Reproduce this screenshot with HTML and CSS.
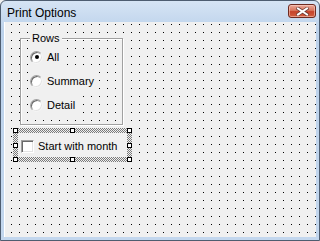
FILE: index.html
```html
<!DOCTYPE html>
<html lang="en">
<head>
    <meta charset="UTF-8">
    <title>Print Options</title>
    <link rel="stylesheet" href="styles.css">
</head>
<body>
    <div class="window">
        <div class="titlebar">
            <span class="title">Print Options</span>
            <button class="close-button" aria-label="Close">
                <svg width="13" height="9" viewBox="0 0 13 9">
                    <path d="M2 1.5 L11 7.5 M11 1.5 L2 7.5" stroke="#6b3a33" stroke-width="3.4" stroke-linecap="square"/>
                    <path d="M2 1.5 L11 7.5 M11 1.5 L2 7.5" stroke="#ffffff" stroke-width="2" stroke-linecap="square"/>
                </svg>
            </button>
        </div>

        <div class="client">
            <div class="frame">
                <span class="frame-label">Rows</span>
                <label class="radio-row"><span class="radio checked"></span>All</label>
                <label class="radio-row"><span class="radio"></span>Summary</label>
                <label class="radio-row"><span class="radio"></span>Detail</label>
            </div>

            <div class="selection">
                <div class="check-control">
                    <span class="checkbox"></span>Start with month
                </div>
                <!-- sizing handles -->
                <span class="handle h-tl"></span>
                <span class="handle h-tm"></span>
                <span class="handle h-tr"></span>
                <span class="handle h-ml"></span>
                <span class="handle h-mr"></span>
                <span class="handle h-bl"></span>
                <span class="handle h-bm"></span>
                <span class="handle h-br"></span>
            </div>
        </div>
    </div>
</body>
</html>
```

FILE: styles.css
```css
:root {
    --face: #f0f0f0;
    --edge-dark: #4e5d70;
    --etch: #a0a0a0;
}

* {
    margin: 0;
    padding: 0;
    box-sizing: border-box;
}

body {
    width: 320px;
    height: 241px;
    overflow: hidden;
    background: var(--face);
    font-family: "Liberation Sans", Arial, sans-serif;
    font-size: 11px;
    color: #000;
}

.window {
    width: 320px;
    height: 241px;
    display: flex;
    flex-direction: column;
    border: 1px solid var(--edge-dark);
    border-radius: 6px 6px 0 0;
    background: linear-gradient(#d6e4f4, #bcd2eb 30px, #c3d7ee);
}

.titlebar {
    height: 21px;
    display: flex;
    align-items: flex-start;
    justify-content: space-between;
    padding: 0 3px 0 6px;
}

.title {
    font-size: 12px;
    line-height: 14px;
    margin-top: 5px;
    color: #000;
}

.close-button {
    width: 28px;
    height: 14px;
    margin-top: 3px;
    border: 1px solid #6e2a20;
    border-radius: 3px;
    background: linear-gradient(#eba99a, #d9785f 45%, #c6432a 55%, #d25e3f);
    box-shadow: inset 0 0 0 1px rgba(255, 220, 210, 0.5);
    display: flex;
    align-items: center;
    justify-content: center;
}

.client {
    flex: 1;
    margin: 0 3px 3px;
    border-left: 1px solid #fff;
    background-color: var(--face);
    background-image:
        linear-gradient(90deg, transparent 1px, var(--face) 1px),
        linear-gradient(#000 1px, var(--face) 1px);
    background-size: 8px 8px;
    background-position: 6px 2px;
    padding: 16px 0 0 15px;
}

.frame {
    position: relative;
    width: 103px;
    height: 87px;
    border: 1px solid var(--etch);
    box-shadow: inset 1px 1px 0 #fff, 1px 1px 0 #fff;
    padding: 6px 0 0 9px;
}

.frame-label {
    position: absolute;
    top: -7px;
    left: 9px;
    padding: 0 2px;
    line-height: 13px;
    background: var(--face);
}

.radio-row {
    display: flex;
    width: max-content;
    align-items: center;
    gap: 4px;
    height: 18px;
    margin: 3px 0 6px;
    padding-right: 3px;
    line-height: 13px;
    background: var(--face);
}

.radio {
    width: 13px;
    height: 13px;
    border-radius: 50%;
    background: #fff;
    border: 1px solid;
    border-color: #a0a0a0 #f4f4f4 #f4f4f4 #a0a0a0;
    box-shadow: inset 1px 1px 0 #696969, inset -1px -1px 0 #e3e3e3;
    display: flex;
    align-items: center;
    justify-content: center;
}

.radio.checked::after {
    content: "";
    width: 4px;
    height: 4px;
    border-radius: 50%;
    background: #000;
}

.selection {
    position: relative;
    width: 119px;
    height: 34px;
    margin: 3px 0 0 -7px;
    padding: 5px;
    background: conic-gradient(#7a7a7a 25%, var(--face) 0 50%, #7a7a7a 0 75%, var(--face) 0);
    background-size: 2px 2px;
}

.check-control {
    height: 100%;
    background: var(--face);
    display: flex;
    align-items: center;
    gap: 4px;
    padding: 3px 0 0 3px;
    line-height: 13px;
}

.checkbox {
    width: 13px;
    height: 13px;
    background: #fff;
    border: 1px solid;
    border-color: #a0a0a0 #fff #fff #a0a0a0;
    box-shadow: inset 1px 1px 0 #696969, inset -1px -1px 0 #e3e3e3;
}

.handle {
    position: absolute;
    width: 5px;
    height: 5px;
    background: #fff;
    border: 1px solid #000;
}

.h-tl { left: 0; top: 0; }
.h-tm { left: 57px; top: 0; }
.h-tr { right: 0; top: 0; }
.h-ml { left: 0; top: 15px; }
.h-mr { right: 0; top: 15px; }
.h-bl { left: 0; bottom: 0; }
.h-bm { left: 57px; bottom: 0; }
.h-br { right: 0; bottom: 0; }
```
